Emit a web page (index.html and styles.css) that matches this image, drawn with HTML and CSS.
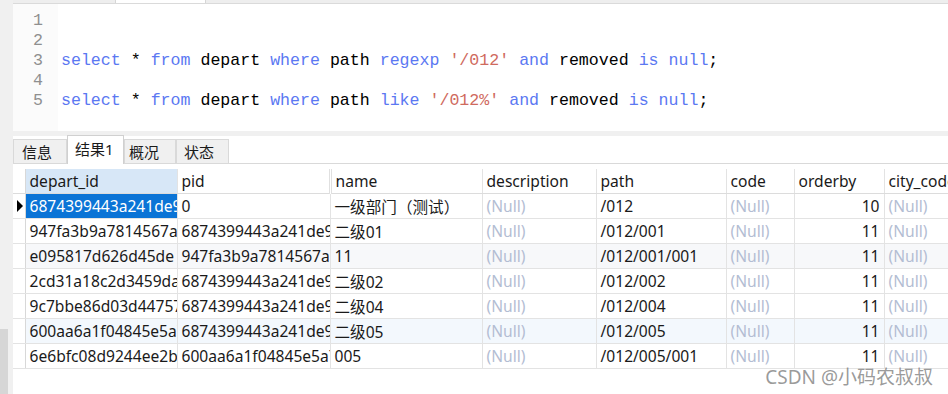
FILE: index.html
```html
<!DOCTYPE html>
<html lang="zh">
<head>
  <meta charset="UTF-8">
  <title>查询 - depart</title>
  <link rel="stylesheet" href="styles.css">
</head>
<body>
  <div class="app">
    <div class="side">
      <div class="thumb"></div>
    </div>

    <div class="main">
      <div class="topbar">
        <div class="topbar-left"></div>
        <div class="topbar-open"></div>
        <div class="topbar-rest"></div>
      </div>

      <div class="editor">
        <div class="gutter">
          <div>1</div>
          <div>2</div>
          <div>3</div>
          <div>4</div>
          <div>5</div>
        </div>
        <div class="code">
          <div>&nbsp;</div>
          <div>&nbsp;</div>
          <div><span class="kw">select</span> * <span class="kw">from</span> depart <span class="kw">where</span> path <span class="kw">regexp</span> <span class="str">'/012'</span> <span class="kw">and</span> removed <span class="kw">is</span> <span class="kw">null</span>;</div>
          <div>&nbsp;</div>
          <div><span class="kw">select</span> * <span class="kw">from</span> depart <span class="kw">where</span> path <span class="kw">like</span> <span class="str">'/012%'</span> <span class="kw">and</span> removed <span class="kw">is</span> <span class="kw">null</span>;</div>
        </div>
      </div>

      <div class="band"></div>

      <div class="tabs">
        <div class="tab">信息</div>
        <div class="tab activo">结果1</div>
        <div class="tab">概况</div>
        <div class="tab">状态</div>
      </div>

      <div class="grid-wrap">
        <table class="grid">
          <colgroup>
            <col style="width:12px">
            <col style="width:152px">
            <col style="width:153px">
            <col style="width:152px">
            <col style="width:114px">
            <col style="width:130px">
            <col style="width:68px">
            <col style="width:90px">
            <col style="width:120px">
          </colgroup>
          <thead>
            <tr>
              <th class="ind"></th>
              <th class="sel-col">depart_id</th>
              <th>pid</th>
              <th class="doble">name</th>
              <th>description</th>
              <th>path</th>
              <th>code</th>
              <th>orderby</th>
              <th>city_code</th>
            </tr>
          </thead>
          <tbody>
            <tr>
              <td class="ind"><span class="flecha"></span></td>
              <td class="sel">6874399443a241de9</td>
              <td>0</td>
              <td>一级部门（测试）</td>
              <td class="nulo">(Null)</td>
              <td>/012</td>
              <td class="nulo">(Null)</td>
              <td class="num">10</td>
              <td class="nulo">(Null)</td>
            </tr>
            <tr>
              <td class="ind"></td>
              <td>947fa3b9a7814567a</td>
              <td>6874399443a241de9</td>
              <td>二级01</td>
              <td class="nulo">(Null)</td>
              <td>/012/001</td>
              <td class="nulo">(Null)</td>
              <td class="num">11</td>
              <td class="nulo">(Null)</td>
            </tr>
            <tr class="gris">
              <td class="ind"></td>
              <td>e095817d626d45de</td>
              <td>947fa3b9a7814567a</td>
              <td>11</td>
              <td class="nulo">(Null)</td>
              <td>/012/001/001</td>
              <td class="nulo">(Null)</td>
              <td class="num">11</td>
              <td class="nulo">(Null)</td>
            </tr>
            <tr>
              <td class="ind"></td>
              <td>2cd31a18c2d3459da</td>
              <td>6874399443a241de9</td>
              <td>二级02</td>
              <td class="nulo">(Null)</td>
              <td>/012/002</td>
              <td class="nulo">(Null)</td>
              <td class="num">11</td>
              <td class="nulo">(Null)</td>
            </tr>
            <tr>
              <td class="ind"></td>
              <td>9c7bbe86d03d44757</td>
              <td>6874399443a241de9</td>
              <td>二级04</td>
              <td class="nulo">(Null)</td>
              <td>/012/004</td>
              <td class="nulo">(Null)</td>
              <td class="num">11</td>
              <td class="nulo">(Null)</td>
            </tr>
            <tr class="azul">
              <td class="ind"></td>
              <td>600aa6a1f04845e5a7</td>
              <td>6874399443a241de9</td>
              <td>二级05</td>
              <td class="nulo">(Null)</td>
              <td>/012/005</td>
              <td class="nulo">(Null)</td>
              <td class="num">11</td>
              <td class="nulo">(Null)</td>
            </tr>
            <tr>
              <td class="ind"></td>
              <td>6e6bfc08d9244ee2b</td>
              <td>600aa6a1f04845e5a7</td>
              <td>005</td>
              <td class="nulo">(Null)</td>
              <td>/012/005/001</td>
              <td class="nulo">(Null)</td>
              <td class="num">11</td>
              <td class="nulo">(Null)</td>
            </tr>
          </tbody>
        </table>
      </div>

      <div class="marca">CSDN @小码农叔叔</div>
    </div>
  </div>
</body>
</html>
```

FILE: styles.css
```css
body {
  margin: 0;
  background: #ffffff;
  font-family: "Noto Sans", "Noto Sans CJK SC", sans-serif;
  color: #1a1a1a;
  overflow: hidden;
}

.app {
  display: flex;
  width: 948px;
  height: 394px;
}

.side {
  width: 13px;
  flex: none;
  background: #f0f0f0;
  display: flex;
  flex-direction: column;
}

.thumb {
  margin-top: auto;
  width: 8px;
  height: 65px;
  background: #d6d6d6;
}

.main {
  position: relative;
  flex: 1;
  min-width: 0;
  display: flex;
  flex-direction: column;
}

/* barra superior */
.topbar {
  display: flex;
  height: 3px;
  border-bottom: 1px solid #dadada;
}

.topbar-left {
  width: 102px;
  background: #eeeeee;
  border-right: 1px solid #d6d6d6;
}

.topbar-open {
  width: 89px;
  background: #ffffff;
}

.topbar-rest {
  flex: 1;
  background: #eeeeee;
  border-left: 1px solid #d6d6d6;
}

/* editor */
.editor {
  display: flex;
  height: 127px;
  box-sizing: border-box;
  padding-top: 7px;
  font-family: "Liberation Mono", "Courier New", monospace;
  font-size: 16.6px;
  line-height: 20px;
  overflow: hidden;
}

.gutter {
  width: 45px;
  flex: none;
  margin-top: -7px;
  padding-top: 7px;
  padding-right: 15px;
  box-sizing: border-box;
  text-align: right;
  color: #8f8f8f;
  background: #fbfbfb;
}

.code {
  padding-left: 3px;
  color: #000000;
}

.code div {
  white-space: pre;
}

.kw {
  color: #5b78f2;
}

.str {
  color: #cf6a5e;
}

.band {
  height: 5px;
  background: #f0f0f0;
}

/* pestañas */
.tabs {
  display: flex;
  align-items: flex-end;
  height: 27px;
  border-bottom: 1px solid #d9d9d9;
  font-size: 15px;
}

.tab {
  height: 24px;
  line-height: 24px;
  padding: 0 8px;
  box-sizing: border-box;
  background: #f0f0f0;
  border: 1px solid #d9d9d9;
  border-bottom: none;
}

.tab:first-child {
  width: 54px;
}

.tab:nth-child(3) {
  width: 52px;
  padding-left: 4px;
}

.tab:nth-child(4) {
  width: 53px;
  padding-left: 7px;
}

.tab.activo {
  width: 57px;
  height: 29px;
  margin-bottom: -1px;
  line-height: 27px;
  background: #ffffff;
  border-color: #d0d0d0;
  padding-left: 7px;
}

/* rejilla */
.grid-wrap {
  padding-top: 5px;
  overflow: hidden;
}

.grid {
  table-layout: fixed;
  border-collapse: collapse;
  width: 991px;
  font-size: 15.6px;
}

.grid th,
.grid td {
  height: 24px;
  padding: 0 4px;
  border: 1px solid #e3e3e3;
  white-space: nowrap;
  overflow: hidden;
  text-overflow: clip;
  text-align: left;
  font-weight: normal;
  color: #1a1a1a;
}

.grid th {
  border-top: none;
  border-bottom-color: #dcdcdc;
}

.grid th.sel-col {
  background: #d7e7f7;
}

.grid th.doble {
  border-left: 3px double #e0e0e0;
}

.grid .ind {
  padding: 0;
  border-left: none;
  border-right-color: #d8d8d8;
}

.flecha {
  display: block;
  margin-left: 4px;
  width: 0;
  height: 0;
  border-top: 6px solid transparent;
  border-bottom: 6px solid transparent;
  border-left: 6px solid #000000;
}

.grid td.sel {
  background: #0b74d6;
  color: #ffffff;
}

.grid td.nulo {
  color: #b3bdd3;
}

.grid td.num {
  text-align: right;
}

.grid tr.gris td {
  background: #f7f8fa;
}

.grid tr.azul td {
  background: #f3f8fd;
}

.grid tr td.ind {
  background: #ffffff;
}

.marca {
  position: absolute;
  right: 15px;
  bottom: 4px;
  font-size: 19px;
  color: rgba(110, 110, 110, 0.7);
}
```
